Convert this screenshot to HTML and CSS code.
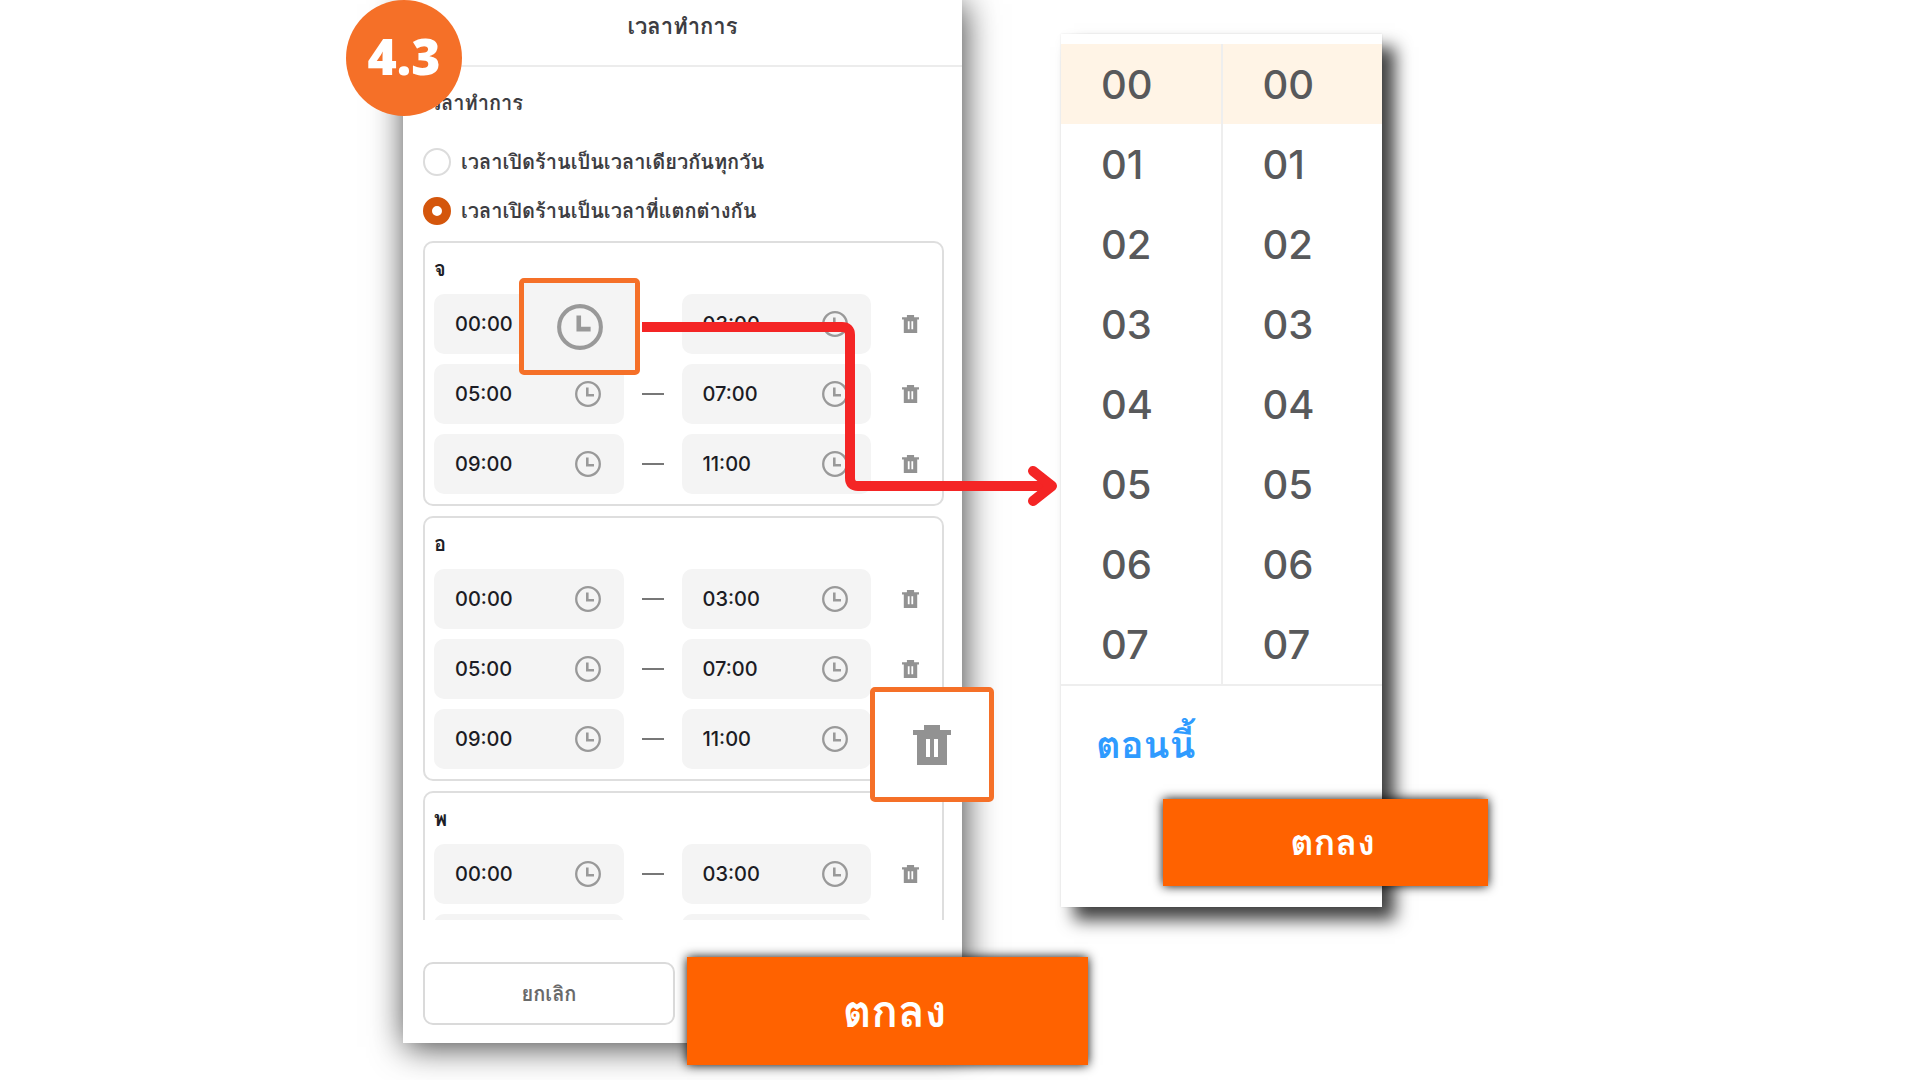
FILE: index.html
```
<!DOCTYPE html>
<html lang="th">
<head>
    <meta charset="UTF-8">
    <meta name="viewport" content="width=device-width, initial-scale=1.0">
    <title>เวลาทำการ</title>
    <link rel="stylesheet" href="styles.css">
</head>
<body>
    <svg class="defs" aria-hidden="true">
        <symbol id="clock" viewBox="0 0 26 26">
            <circle cx="13" cy="13" r="11.8" fill="none" stroke="#999" stroke-width="2.3"/>
            <path d="M12.3 6.5v7.7h6.7" fill="none" stroke="#999" stroke-width="2.6"/>
        </symbol>
        <symbol id="trash" viewBox="0 0 38 40">
            <path fill="#929292" fill-rule="evenodd" d="M11 0h16v5h11v5h-4v30H4V10H0V5h11zM13 14v18h4V14zM21 14v18h4V14z"/>
        </symbol>
    </svg>

    <main class="stage">
        <section class="phone">
            <header class="phone-header"><h1>เวลาทำการ</h1></header>
            <div class="phone-body">
                <h2>เวลาทำการ</h2>
                <label class="option"><input type="radio" name="mode">เวลาเปิดร้านเป็นเวลาเดียวกันทุกวัน</label>
                <label class="option"><input type="radio" name="mode" checked>เวลาเปิดร้านเป็นเวลาที่แตกต่างกัน</label>
                <div class="days" id="days"></div>
            </div>
            <footer class="phone-footer">
                <button class="cancel" type="button">ยกเลิก</button>
            </footer>

            <div class="step">4.3</div>
            <button class="callout callout-clock" type="button" aria-label="เลือกเวลา"><svg><use href="#clock"/></svg></button>
            <button class="callout callout-trash" type="button" aria-label="ลบ"><svg><use href="#trash"/></svg></button>
            <svg class="arrow" viewBox="0 0 416 190" aria-hidden="true">
                <path d="M0 5h200q8 0 8 8v143q0 8 8 8h190" fill="none" stroke="#f42525" stroke-width="10"/>
                <path d="M391 149l19 15-19 15" fill="none" stroke="#f42525" stroke-width="10" stroke-linecap="round" stroke-linejoin="round"/>
            </svg>
            <button class="confirm confirm-big" type="button">ตกลง</button>
        </section>

        <section class="picker">
            <div class="columns">
                <ul class="column"></ul>
                <ul class="column"></ul>
            </div>
            <div class="picker-footer">
                <a class="now" href="#">ตอนนี้</a>
            </div>
            <button class="confirm confirm-small" type="button">ตกลง</button>
        </section>
    </main>

    <script>
        var days = ["จ", "อ", "พ"];
        var slots = [["00:00", "03:00"], ["05:00", "07:00"], ["09:00", "11:00"]];

        function field(value, label) {
            return `<label class="field"><input type="text" value="${value}" aria-label="${label}"><svg><use href="#clock"/></svg></label>`;
        }

        document.getElementById("days").innerHTML = days.map(function (day) {
            var rows = slots.map(function (s) {
                return `<div class="slot">${field(s[0], "เปิด")}<span class="dash"></span>${field(s[1], "ปิด")}
                    <button class="remove" type="button" aria-label="ลบ"><svg><use href="#trash"/></svg></button></div>`;
            }).join("");
            return `<div class="day"><h3>${day}</h3>${rows}</div>`;
        }).join("");

        document.querySelectorAll(".column").forEach(function (col) {
            for (var i = 0; i < 8; i++) {
                col.innerHTML += `<li><button type="button" class="${i == 0 ? "selected" : ""}">0${i}</button></li>`;
            }
        });
    </script>
</body>
</html>
```
FILE: styles.css
```
* {
    box-sizing: border-box;
}

body {
    margin: 0;
    background: #fff;
    color: #3d3d42;
    font-family: Inter, Thonburi, Loma, "Noto Sans Thai Looped", Waree, Garuda, sans-serif;
    overflow: hidden;
}

h1, h2, h3, ul {
    margin: 0;
    padding: 0;
}

button, input {
    font-family: inherit;
}

.defs {
    position: absolute;
    width: 0;
    height: 0;
}

.stage {
    display: flex;
    justify-content: center;
    align-items: flex-start;
    gap: 99px;
    padding-right: 135px;
    min-height: 100vh;
}

/* phone */
.phone {
    position: relative;
    flex: 0 1 559px;
    min-width: 0;
    background: #fff;
    box-shadow: 2px 4px 32px rgba(0, 0, 0, 0.75);
}

.phone-header {
    height: 67px;
    padding-top: 10px;
    border-bottom: 2px solid #ececec;
    text-align: center;
}

h1, h2 {
    font-size: 22px;
    line-height: 32px;
    font-weight: 800;
}

h2 {
    font-size: 20px;
    margin-bottom: 18px;
}

.phone-body {
    padding: 20px 18px 0 20px;
}

.option {
    display: flex;
    align-items: center;
    gap: 10px;
    height: 49px;
    margin: 0;
    font-size: 20px;
    font-weight: 800;
}

.option input {
    appearance: none;
    width: 28px;
    height: 28px;
    margin: 0;
    border: 2px solid #dcdcdc;
    border-radius: 50%;
    background: #fff;
}

.option input:checked {
    border: 9px solid #d4560c;
}

.days {
    height: 679px;
    margin-top: 6px;
    overflow: hidden;
}

.day {
    height: 265px;
    margin-bottom: 10px;
    padding: 11px 9px;
    border: 2px solid #dedede;
    border-radius: 10px;
}

.day h3 {
    color: #1e1e26;
    font-size: 20px;
    line-height: 30px;
    font-weight: 800;
    margin-bottom: 10px;
}

.slot {
    display: flex;
    align-items: center;
    margin-bottom: 10px;
}

.field {
    flex: 1;
    min-width: 0;
    display: flex;
    align-items: center;
    height: 60px;
    padding: 0 23px 0 21px;
    border-radius: 10px;
    background: #f4f4f4;
}

.field input {
    flex: 1;
    min-width: 0;
    padding: 0;
    border: 0;
    background: none;
    color: #1c1c24;
    font-size: 20px;
    font-weight: 500;
}

.field svg {
    width: 26px;
    height: 26px;
}

.dash {
    width: 22px;
    height: 2px;
    margin: 0 18px;
    background: #777;
}

.remove {
    width: 46px;
    height: 40px;
    margin-left: 16px;
    padding: 0;
    border: 0;
    background: none;
}

.remove svg {
    display: block;
    width: 17px;
    height: 18px;
    margin: auto;
}

.phone-footer {
    padding: 42px 20px 18px;
}

.cancel {
    width: 252px;
    height: 63px;
    border: 2px solid #dadada;
    border-radius: 10px;
    background: #fff;
    color: #6a6a6a;
    font-size: 20px;
    font-weight: 800;
}

/* things lying over the screen */
.step {
    position: absolute;
    left: -57px;
    top: 0;
    width: 116px;
    height: 116px;
    border-radius: 50%;
    background: #f57028;
    color: #fff;
    font-family: "Noto Sans", sans-serif;
    font-size: 50px;
    line-height: 112px;
    font-weight: 900;
    text-align: center;
}

.callout {
    position: absolute;
    display: flex;
    align-items: center;
    justify-content: center;
    padding: 0;
    border: 5px solid #f57028;
    border-radius: 5px;
}

.callout-clock {
    left: 116px;
    top: 278px;
    width: 121px;
    height: 97px;
    background: #f4f4f4;
}

.callout-clock svg {
    width: 46px;
    height: 46px;
}

.callout-trash {
    right: -32px;
    top: 687px;
    width: 124px;
    height: 115px;
    background: #fff;
}

.callout-trash svg {
    width: 38px;
    height: 40px;
}

.arrow {
    position: absolute;
    left: 239px;
    top: 322px;
    width: 416px;
    height: 190px;
}

.confirm {
    position: absolute;
    border: 0;
    background: #ff6200;
    color: #fff;
    font-weight: 900;
    box-shadow: 0 0 10px rgba(0, 0, 0, 0.95);
    padding: 0 0 0 14px;
}

.confirm-big {
    right: -126px;
    top: 957px;
    width: 401px;
    height: 108px;
    font-size: 44px;
}

/* time picker */
.picker {
    position: relative;
    z-index: -1;
    flex: 0 1 321px;
    margin-top: 34px;
    padding-top: 10px;
    background: #fff;
    box-shadow: 13px 13px 16px rgba(0, 0, 0, 0.75), 0 0 2px rgba(0, 0, 0, 0.1);
}

.columns {
    display: flex;
    border-bottom: 2px solid #eee;
}

.column {
    flex: 1;
    list-style: none;
}

.column + .column {
    border-left: 2px solid #eee;
}

.column button {
    display: block;
    width: 100%;
    height: 80px;
    padding: 0 40px;
    border: 0;
    background: none;
    color: #58595b;
    font-size: 40px;
    font-weight: 500;
    text-align: left;
}

.column .selected {
    background: #fff4e6;
}

.picker-footer {
    height: 221px;
    padding: 32px 35px;
}

.now {
    color: #2f9bff;
    font-size: 38px;
    line-height: 52px;
    font-weight: 700;
    text-decoration: none;
}

.confirm-small {
    right: -106px;
    bottom: 21px;
    width: 325px;
    height: 87px;
    font-size: 36px;
}
```
